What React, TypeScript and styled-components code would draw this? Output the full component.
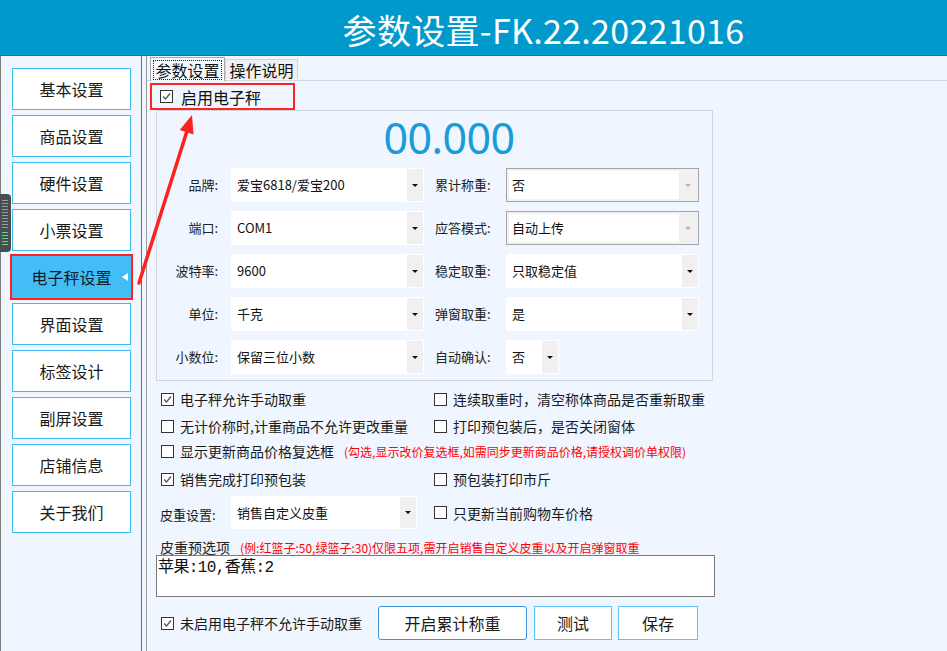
import React from "react";
import styled, { createGlobalStyle, css } from "styled-components";

const GlobalStyle = createGlobalStyle`
  html, body { margin: 0; padding: 0; background: #eff6ff; }
  body { font-family: "Noto Sans CJK SC", "Noto Sans", sans-serif; color: #1a1a1a; }
  * { box-sizing: border-box; }
`;

const Root = styled.div`
  position: relative;
  width: 947px;
  height: 651px;
  overflow: hidden;
  background: #eff6ff;
  display: flex;
  flex-direction: column;
`;

const TitleBar = styled.div`
  height: 56px;
  flex: none;
  background: #0099cc;
  border-bottom: 1px solid #5a5a5a;
  display: flex;
  align-items: center;
  justify-content: center;
  padding-left: 140px;
  padding-top: 4px;
`;

const Title = styled.div`
  color: #ffffff;
  font-size: 34px;
  line-height: 40px;
  letter-spacing: 0.3px;
`;

const Main = styled.div`
  flex: 1;
  display: flex;
  min-height: 0;
`;

const Sidebar = styled.div`
  width: 142px;
  flex: none;
  border-left: 1px solid #7c7c7c;
  border-right: 1px solid #6a6a6a;
  padding: 12px 0 0 11px;
  display: flex;
  flex-direction: column;
  gap: 5px;
`;

const NavButton = styled.div<{ $active?: boolean }>`
  position: relative;
  width: 119px;
  height: 42px;
  flex: none;
  border: 1px solid #3dbcf2;
  background: #ffffff;
  display: flex;
  align-items: center;
  justify-content: center;
  font-size: 16px;
  color: #1a1a1a;
  ${(p) =>
    p.$active &&
    css`
      background: #42bdf6;
      border-color: #42bdf6;
      outline: 2px solid #ff2020;
      color: #10202a;
      &::after {
        content: "";
        position: absolute;
        right: 2px;
        top: 16px;
        border-style: solid;
        border-width: 4px 6px 4px 0;
        border-color: transparent #ffffff transparent transparent;
      }
    `}
`;

const Panel = styled.div`
  flex: 1;
  margin-left: 4px;
  border-left: 1px solid #9a9a9a;
  display: flex;
  flex-direction: column;
`;

const TabStrip = styled.div`
  height: 24px;
  flex: none;
  display: flex;
  align-items: flex-end;
  padding-left: 3px;
  position: relative;
  z-index: 1;
`;

const Tab = styled.div<{ $active?: boolean }>`
  font-size: 16px;
  display: flex;
  align-items: center;
  justify-content: center;
  color: #111;
  ${(p) =>
    p.$active
      ? css`
          width: 75px;
          height: 24px;
          margin-bottom: -1px;
          background: #f6faff;
          border: 1px solid #a8a8a8;
          border-bottom: none;
          padding: 1px 2px 0;
        `
      : css`
          width: 73px;
          height: 20px;
          margin-bottom: 1px;
          background: #f0f0f0;
          border: 1px solid #d6d6d6;
          border-bottom: none;
        `}
`;

const FocusLabel = styled.span`
  display: flex;
  align-items: center;
  justify-content: center;
  width: 100%;
  height: 20px;
  border: 1px dotted #222;
  line-height: 18px;
`;

const TabBody = styled.div`
  flex: 1;
  border-top: 1px solid #d5d8dc;
  padding-left: 9px;
  display: flex;
  flex-direction: column;
`;

const EnableBox = styled.div`
  margin: 2px 0 0 -6px;
  width: 145px;
  height: 27px;
  border: 2px solid #ff2323;
  display: flex;
  align-items: center;
  padding-left: 8px;
  font-size: 16px;
  color: #111;
`;

const BoxWrap = styled.span<{ $gap: number }>`
  width: 13px;
  height: 13px;
  flex: none;
  border: 1px solid #333;
  background: #fff;
  margin-right: ${(p) => p.$gap}px;
  display: inline-flex;
  align-items: center;
  justify-content: center;
`;

const CheckBox: React.FC<{ checked?: boolean; gap?: number }> = ({ checked, gap = 6 }) => (
  <BoxWrap $gap={gap}>
    {checked && (
      <svg width="11" height="11" viewBox="0 0 11 11">
        <polyline points="2,5.5 4.5,8 9,2.5" fill="none" stroke="#555" strokeWidth="1.3" />
      </svg>
    )}
  </BoxWrap>
);

const GroupBox = styled.div`
  width: 557px;
  border: 1px solid #d3d6da;
  display: flex;
  flex-direction: column;
  padding-bottom: 6px;
`;

const Weight = styled.div`
  height: 57px;
  text-align: center;
  padding-left: 29px;
  font-family: "Noto Sans", "Open Sans", sans-serif;
  font-size: 43px;
  line-height: 53px;
  color: #1b9bd7;
  letter-spacing: -0.6px;
`;

const FormRows = styled.div`
  display: flex;
  flex-direction: column;
  gap: 9px;
`;

const FormRow = styled.div`
  display: flex;
  height: 34px;
  align-items: stretch;
`;

const LeftLabel = styled.div`
  width: 74px;
  padding-right: 13px;
  text-align: right;
  font-size: 13px;
  line-height: 34px;
  color: #222;
`;

const RightLabel = styled.div`
  width: 71px;
  margin-left: 11px;
  font-size: 13px;
  line-height: 34px;
  color: #222;
`;

const SelectBox = styled.div<{ $w: number; $disabled?: boolean }>`
  width: ${(p) => p.$w}px;
  display: flex;
  background: #fff;
  ${(p) =>
    p.$disabled &&
    css`
      border: 1px solid #a5a5a5;
      background: #f2f2f2;
      padding: 2px 1px 2px 2px;
    `}
`;

const SelectText = styled.div<{ $disabled?: boolean }>`
  flex: 1;
  background: #fff;
  font-size: 13px;
  line-height: ${(p) => (p.$disabled ? 28 : 34)}px;
  padding-left: ${(p) => (p.$disabled ? 3 : 6)}px;
  color: #111;
  white-space: nowrap;
`;

const SelectArrow = styled.div<{ $disabled?: boolean }>`
  width: ${(p) => (p.$disabled ? 18 : 16)}px;
  margin: ${(p) => (p.$disabled ? "0" : "1px")};
  background: #f0f0f0;
  display: flex;
  align-items: center;
  justify-content: center;
  &::before {
    content: "";
    border-style: solid;
    border-width: 3px 3px 0 3px;
    border-color: ${(p) => (p.$disabled ? "#b4b4b4" : "#111")} transparent transparent transparent;
  }
`;

const Select: React.FC<{ value: string; w?: number; disabled?: boolean }> = ({ value, w = 193, disabled }) => (
  <SelectBox $w={w} $disabled={disabled}>
    <SelectText $disabled={disabled}>{value}</SelectText>
    <SelectArrow $disabled={disabled} />
  </SelectBox>
);

const OptionRow = styled.div<{ $h: number; $pt?: number }>`
  height: ${(p) => p.$h}px;
  padding-top: ${(p) => p.$pt ?? 0}px;
  display: flex;
  align-items: center;
  margin-left: 5px;
  flex: none;
`;

const OptCol = styled.div<{ $w?: number }>`
  ${(p) => (p.$w ? `width: ${p.$w}px;` : "")}
  display: flex;
  align-items: center;
  font-size: 14px;
  color: #1a1a1a;
  white-space: nowrap;
`;

const Note = styled.span<{ $ml: number }>`
  color: #ff0000;
  font-size: 12px;
  margin-left: ${(p) => p.$ml}px;
  white-space: nowrap;
`;

const TareLabel = styled.span`
  font-size: 13px;
  width: 71px;
  margin-left: -1px;
  line-height: 33px;
  padding-top: 3px;
`;

const TareSelect = styled.div`
  display: flex;
  height: 33px;
`;

const PresetRow = styled.div`
  margin: 10px 0 0 4px;
  height: 16px;
  display: flex;
  align-items: center;
  font-size: 14px;
  color: #222;
`;

const PresetArea = styled.div`
  width: 559px;
  height: 42px;
  border: 1px solid #7a7a7a;
  background: #fff;
  padding: 1px 0 0 1px;
  font-family: "Liberation Mono", "Noto Sans CJK SC", monospace;
  font-size: 16px;
  line-height: 22px;
  letter-spacing: -0.6px;
  color: #111;
`;

const BottomRow = styled.div`
  margin: 9px 0 0 5px;
  height: 34px;
  display: flex;
  align-items: center;
`;

const ActionButton = styled.div<{ $w: number; $primary?: boolean; $ml: number }>`
  width: ${(p) => p.$w}px;
  height: 34px;
  margin-left: ${(p) => p.$ml}px;
  background: #fff;
  border: 1px solid ${(p) => (p.$primary ? "#3b93e0" : "#5cc4f4")};
  border-radius: ${(p) => (p.$primary ? 3 : 0)}px;
  display: flex;
  align-items: center;
  justify-content: center;
  font-size: 16px;
  color: #1a1a1a;
`;

const Handle = styled.div`
  position: absolute;
  left: 0;
  top: 194px;
  width: 11px;
  height: 58px;
  background: #4a4d50;
  border-radius: 0 4px 4px 0;
  padding: 6px 3px 5px 2px;
  display: flex;
  flex-direction: column;
  gap: 2px;
`;

const HandleStripes = styled.div<{ $green?: boolean; $h: number }>`
  height: ${(p) => p.$h}px;
  background: repeating-linear-gradient(
    to bottom,
    ${(p) => (p.$green ? "#5fd38a" : "#9a9d9f")} 0 1px,
    transparent 1px 3px
  );
`;

const ArrowSvg = styled.svg`
  position: absolute;
  left: 130px;
  top: 110px;
  pointer-events: none;
`;

const navItems = ["基本设置", "商品设置", "硬件设置", "小票设置", "电子秤设置", "界面设置", "标签设计", "副屏设置", "店铺信息", "关于我们"];

const formRows: { l: string; lv: string; r: string; rv: string; rDis?: boolean; rw?: number }[] = [
  { l: "品牌:", lv: "爱宝6818/爱宝200", r: "累计称重:", rv: "否", rDis: true },
  { l: "端口:", lv: "COM1", r: "应答模式:", rv: "自动上传", rDis: true },
  { l: "波特率:", lv: "9600", r: "稳定取重:", rv: "只取稳定值" },
  { l: "单位:", lv: "千克", r: "弹窗取重:", rv: "是" },
  { l: "小数位:", lv: "保留三位小数", r: "自动确认:", rv: "否", rw: 53 },
];

export default function App() {
  return (
    <Root>
      <GlobalStyle />
      <TitleBar>
        <Title>参数设置-FK.22.20221016</Title>
      </TitleBar>
      <Main>
        <Sidebar>
          {navItems.map((n) => (
            <NavButton key={n} $active={n === "电子秤设置"}>
              {n}
            </NavButton>
          ))}
        </Sidebar>
        <Panel>
          <TabStrip>
            <Tab $active>
              <FocusLabel>参数设置</FocusLabel>
            </Tab>
            <Tab>操作说明</Tab>
          </TabStrip>
          <TabBody>
            <EnableBox>
              <CheckBox checked gap={8} />
              启用电子秤
            </EnableBox>
            <GroupBox>
              <Weight>00.000</Weight>
              <FormRows>
                {formRows.map((r) => (
                  <FormRow key={r.l}>
                    <LeftLabel>{r.l}</LeftLabel>
                    <Select value={r.lv} />
                    <RightLabel>{r.r}</RightLabel>
                    <Select value={r.rv} disabled={r.rDis} w={r.rw} />
                  </FormRow>
                ))}
              </FormRows>
            </GroupBox>
            <OptionRow $h={31} $pt={5}>
              <OptCol $w={273}>
                <CheckBox checked />
                电子秤允许手动取重
              </OptCol>
              <OptCol>
                <CheckBox />
                连续取重时，清空称体商品是否重新取重
              </OptCol>
            </OptionRow>
            <OptionRow $h={28}>
              <OptCol $w={273}>
                <CheckBox />
                无计价称时,计重商品不允许更改重量
              </OptCol>
              <OptCol>
                <CheckBox />
                打印预包装后，是否关闭窗体
              </OptCol>
            </OptionRow>
            <OptionRow $h={22}>
              <OptCol>
                <CheckBox />
                显示更新商品价格复选框
                <Note $ml={10}>(勾选,显示改价复选框,如需同步更新商品价格,请授权调价单权限)</Note>
              </OptCol>
            </OptionRow>
            <OptionRow $h={34}>
              <OptCol $w={273}>
                <CheckBox checked />
                销售完成打印预包装
              </OptCol>
              <OptCol>
                <CheckBox />
                预包装打印市斤
              </OptCol>
            </OptionRow>
            <OptionRow $h={33}>
              <OptCol $w={273}>
                <TareLabel>皮重设置:</TareLabel>
                <TareSelect>
                  <Select value="销售自定义皮重" w={186} />
                </TareSelect>
              </OptCol>
              <OptCol>
                <CheckBox />
                只更新当前购物车价格
              </OptCol>
            </OptionRow>
            <PresetRow>
              皮重预选项
              <Note $ml={10}>(例:红篮子:50,绿篮子:30)仅限五项,需开启销售自定义皮重以及开启弹窗取重</Note>
            </PresetRow>
            <PresetArea>苹果:10,香蕉:2</PresetArea>
            <BottomRow>
              <OptCol $w={217}>
                <CheckBox checked />
                未启用电子秤不允许手动取重
              </OptCol>
              <ActionButton $w={149} $ml={0} $primary>
                开启累计称重
              </ActionButton>
              <ActionButton $w={78} $ml={7}>
                测试
              </ActionButton>
              <ActionButton $w={80} $ml={6}>
                保存
              </ActionButton>
            </BottomRow>
          </TabBody>
        </Panel>
      </Main>
      <Handle>
        <HandleStripes $h={30} />
        <HandleStripes $h={14} $green />
      </Handle>
      <ArrowSvg width="80" height="180" viewBox="0 0 80 180">
        <line x1="9" y1="173" x2="56.6" y2="22.2" stroke="#ff2020" strokeWidth="3.5" strokeLinecap="round" />
        <polygon points="62,5 63.5,24.5 49.7,20" fill="#ff2020" />
      </ArrowSvg>
    </Root>
  );
}
